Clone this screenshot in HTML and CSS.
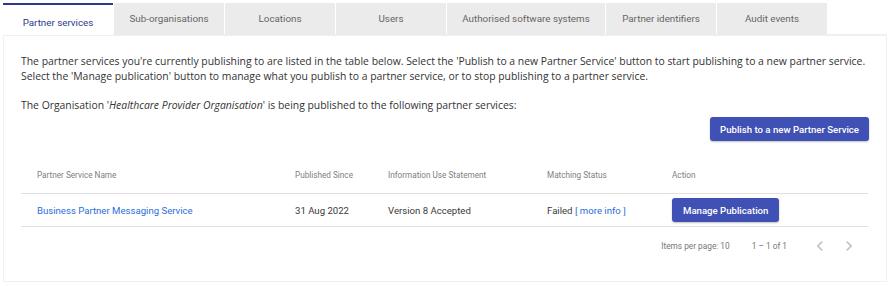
FILE: index.html
```html
<!DOCTYPE html>
<html lang="en">
<head>
  <meta charset="UTF-8">
  <title>Partner services</title>
  <link rel="stylesheet" href="styles.css">
</head>
<body>
  <div class="page">
    <nav class="tabs">
      <div class="tab active">Partner services</div>
      <div class="tab">Sub-organisations</div>
      <div class="tab">Locations</div>
      <div class="tab">Users</div>
      <div class="tab wide">Authorised software systems</div>
      <div class="tab">Partner identifiers</div>
      <div class="tab">Audit events</div>
    </nav>
    <section class="panel">
      <p class="intro">The partner services you're currently publishing to are listed in the table below. Select the 'Publish to a new Partner Service' button to start publishing to a new partner service. Select the 'Manage publication' button to manage what you publish to a partner service, or to stop publishing to a partner service.</p>
      <p class="intro">The Organisation '<em>Healthcare Provider Organisation</em>' is being published to the following partner services:</p>
      <div class="actions">
        <button class="btn">Publish to a new Partner Service</button>
      </div>
      <table class="grid">
        <thead>
          <tr>
            <th class="c-name">Partner Service Name</th>
            <th class="c-since">Published Since</th>
            <th class="c-info">Information Use Statement</th>
            <th class="c-status">Matching Status</th>
            <th>Action</th>
          </tr>
        </thead>
        <tbody>
          <tr>
            <td class="c-name"><a href="#">Business Partner Messaging Service</a></td>
            <td>31 Aug 2022</td>
            <td>Version 8 Accepted</td>
            <td>Failed <a href="#">[ more info ]</a></td>
            <td><button class="btn small">Manage Publication</button></td>
          </tr>
        </tbody>
      </table>
      <div class="paginator">
        <span class="per-page">Items per page: 10</span>
        <span class="range">1 – 1 of 1</span>
        <span class="nav">
          <svg width="20" height="20" viewBox="0 0 24 24"><path d="M15.4 7.4 14 6l-6 6 6 6 1.4-1.4L10.8 12z" fill="#c4c4c4"/></svg>
          <svg width="20" height="20" viewBox="0 0 24 24"><path d="M10 6 8.6 7.4 13.2 12l-4.6 4.6L10 18l6-6z" fill="#c4c4c4"/></svg>
        </span>
      </div>
    </section>
  </div>
</body>
</html>
```

FILE: styles.css
```css
body {
  margin: 0;
  background: #fff;
  font-family: Roboto, "Liberation Sans", sans-serif;
}
.page {
  padding: 3px 3px 0 3px;
  width: 884px;
}
.tabs {
  display: flex;
  gap: 1px;
  height: 32px;
}
.tab {
  width: 110px;
  background: #ebebeb;
  color: #666;
  font-size: 9.8px;
  display: flex;
  align-items: center;
  justify-content: center;
  padding-bottom: 1px;
  box-sizing: border-box;
}
.tab.wide { width: 158px; }
.tab.active {
  background: #fff;
  color: #2b3a8a;
  border-top: 2px solid #2b3a8a;
  padding-bottom: 0;
  padding-top: 4px;
}
.panel {
  border: 1px solid #f0f0f0;
  border-top: 2px solid #f0f0f0;
  margin-top: -1px;
  height: 248px;
  box-sizing: border-box;
  padding: 18px 17px 0 17px;
}
.intro {
  font-family: "Open Sans", sans-serif;
  font-size: 10.4px;
  line-height: 15px;
  color: #333;
  margin: 0 0 14px 0;
}
.intro em { font-style: italic; }
.actions {
  display: flex;
  justify-content: flex-end;
  margin-top: -10px;
}
.btn {
  background: #3f51b5;
  color: #fff;
  border: none;
  border-radius: 3px;
  font-family: Roboto, sans-serif;
  font-weight: 500;
  font-size: 9.6px;
  height: 24px;
  padding: 0 10px;
  box-shadow: 0 1px 2px rgba(0,0,0,.25);
}
.btn.small { padding: 0 11px; }
.grid {
  width: 847px;
  border-collapse: collapse;
  margin-top: 16px;
}
.grid th {
  font-weight: normal;
  font-size: 8.2px;
  color: #808080;
  text-align: left;
  height: 36px;
  padding: 0;
  vertical-align: middle;
  border-bottom: 1px solid #e0e0e0;
}
.grid td {
  font-size: 9.6px;
  color: #3a3a3a;
  height: 32px;
  padding: 0;
  border-bottom: 1px solid #e0e0e0;
}
.grid .c-name { padding-left: 16px; width: 258px; }
.grid .c-since { width: 93px; }
.grid .c-info { width: 159px; }
.grid .c-status { width: 125px; }
.grid a {
  color: #2a6ddb;
  text-decoration: none;
}
.paginator {
  display: flex;
  align-items: center;
  justify-content: flex-end;
  height: 38px;
  font-size: 8.3px;
  color: #777;
  width: 847px;
}
.range { margin-left: 22px; }
.nav {
  display: flex;
  gap: 9px;
  margin-left: 23px;
  margin-right: 9px;
}
```
